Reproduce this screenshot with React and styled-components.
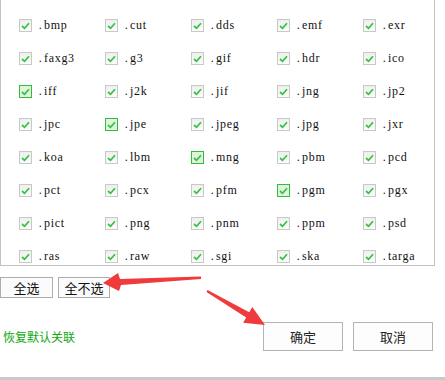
import React from "react";
import styled, { createGlobalStyle } from "styled-components";

const Global = createGlobalStyle`
  html, body { margin: 0; padding: 0; background: #fff; }
  body { width: 445px; height: 380px; overflow: hidden; }
`;

const Page = styled.div`
  position: relative;
  width: 445px;
  height: 380px;
  background: #fff;
  font-family: "Noto Sans CJK SC", "Liberation Sans", sans-serif;
  display: flex;
  flex-direction: column;
`;

const ListPanel = styled.div`
  width: 433px;
  height: 265px;
  border: 1px solid #c2c2c2;
  border-top: none;
  display: flex;
  box-sizing: content-box;
`;

const Grid = styled.div`
  flex: 1;
  display: grid;
  grid-template-columns: repeat(5, 86px);
  grid-auto-rows: 33px;
  padding: 19px 0 0 18px;
`;

const Item = styled.div`
  display: flex;
  align-items: flex-start;
  height: 14px;
`;

const Box = styled.span`
  width: 13px;
  height: 13px;
  box-sizing: border-box;
  border: 1px solid ${(p) => (p.$hl ? "#2fbe35" : "#c8c8c8")};
  background: ${(p) =>
    p.$hl ? "#dff3df" : "linear-gradient(#efefef, #fcfcfc)"};
  display: flex;
  align-items: center;
  justify-content: center;
  flex: none;
  margin-right: 5px;
`;

const Dot = styled.span`
  display: inline-block;
  width: 7px;
  text-align: center;
`;

const Label = styled.span`
  font-family: "Liberation Serif", "DejaVu Serif", serif;
  font-size: 12px;
  letter-spacing: 0.7px;
  line-height: 13px;
  color: #111;
`;

const Scrollbar = styled.div`
  width: 9px;
  margin-right: 1px;
  background: #f1f1f1;
  display: flex;
  flex-direction: column;
  align-items: center;
`;

const Arrow = styled.div`
  width: 0;
  height: 0;
  border-left: 3px solid transparent;
  border-right: 3px solid transparent;
  ${(p) =>
    p.$down
      ? "border-top: 3px solid #c8c8c8; margin-top: auto; margin-bottom: 3px;"
      : "border-bottom: 3px solid #c8c8c8; margin-top: 3px;"}
`;

const Thumb = styled.div`
  width: 8px;
  height: 172px;
  margin-top: 4px;
  background: #cdcdcd;
`;

const SelectRow = styled.div`
  display: flex;
  gap: 5px;
  margin-top: 11px;
`;

const SmallButton = styled.button`
  width: ${(p) => p.$w}px;
  height: 21px;
  padding: 0;
  border: 1px solid #adadad;
  background: #fbfbfb;
  font-family: "Noto Sans CJK SC", sans-serif;
  font-size: 13px;
  color: #111;
  line-height: 19px;
`;

const Footer = styled.div`
  display: flex;
  align-items: center;
  margin-top: 24px;
  padding: 0 12px 0 3px;
`;

const Restore = styled.span`
  font-size: 12px;
  color: #12a812;
  flex: 1;
`;

const BigButton = styled.button`
  width: 80px;
  height: 29px;
  padding: 0;
  border: 1px solid #b4b4b4;
  background: #fdfdfd;
  font-family: "Noto Sans CJK SC", sans-serif;
  font-size: 13px;
  color: #222;
  margin-left: ${(p) => p.$ml || 0}px;
`;

const BottomStrip = styled.div`
  margin-top: auto;
  height: 3px;
  background: #c9c9c9;
`;

const Overlay = styled.svg`
  position: absolute;
  left: 0;
  top: 0;
  pointer-events: none;
`;

const Check = () => (
  <svg width="9" height="8" viewBox="0 0 9 8">
    <path d="M1 4 L3.5 6.3 L8 1.2" fill="none" stroke="#33c43f" strokeWidth="1.7" />
  </svg>
);

const items = [
  "bmp", "cut", "dds", "emf", "exr",
  "faxg3", "g3", "gif", "hdr", "ico",
  "iff", "j2k", "jif", "jng", "jp2",
  "jpc", "jpe", "jpeg", "jpg", "jxr",
  "koa", "lbm", "mng", "pbm", "pcd",
  "pct", "pcx", "pfm", "pgm", "pgx",
  "pict", "png", "pnm", "ppm", "psd",
  "ras", "raw", "sgi", "ska", "targa",
];
const highlighted = new Set(["iff", "jpe", "mng", "pgm"]);

export default function App() {
  return (
    <Page>
      <Global />
      <ListPanel>
        <Grid>
          {items.map((n) => (
            <Item key={n}>
              <Box $hl={highlighted.has(n)}>
                <Check />
              </Box>
              <Label>
                <Dot>.</Dot>
                {n}
              </Label>
            </Item>
          ))}
        </Grid>
        <Scrollbar>
          <Arrow />
          <Thumb />
          <Arrow $down />
        </Scrollbar>
      </ListPanel>
      <SelectRow>
        <SmallButton $w={53}>全选</SmallButton>
        <SmallButton $w={52}>全不选</SmallButton>
      </SelectRow>
      <Footer>
        <Restore>恢复默认关联</Restore>
        <BigButton>确定</BigButton>
        <BigButton $ml={10}>取消</BigButton>
      </Footer>
      <BottomStrip />
      <Overlay width="445" height="380" viewBox="0 0 445 380">
        <polygon
          points="103,283 118,273 120,279 201,276.5 201,279 121,285 119,291"
          fill="#ef3b3b"
        />
        <polygon
          points="265,325 252.3,307.1 249.2,312.3 207.5,290.1 206.5,291.9 246.2,317.5 243.1,322.7"
          fill="#ef3b3b"
        />
      </Overlay>
    </Page>
  );
}
